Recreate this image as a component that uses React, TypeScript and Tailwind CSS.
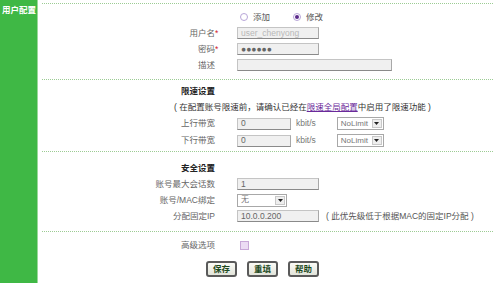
import React from "react";

const font = { fontFamily: '"Liberation Sans", "Noto Sans CJK SC", sans-serif' };

const Dotted = ({ className = "" }: { className?: string }) => (
  <div className={`h-0 border-t border-dotted border-[#9ccc94] ${className}`} />
);

const Row = ({
  label,
  star,
  h = "h-[16px]",
  children,
}: {
  label?: string;
  star?: boolean;
  h?: string;
  children?: React.ReactNode;
}) => (
  <div className={`flex items-center ${h}`}>
    <div className="w-[173px] text-right text-[#666] leading-none">{label}</div>
    <div className="w-[8px] text-[#d0202a] leading-none">{star ? "*" : ""}</div>
    <div className="ml-[14px] flex items-center">{children}</div>
  </div>
);

const Input = ({ w, value, muted }: { w: string; value?: string; muted?: boolean }) => (
  <div
    className={`${w} h-[12px] flex items-center bg-[#f0f0f0] border border-[#c4c4c4] border-b-[#8a8a8a] border-r-[#a8a8a8] px-[3px] leading-none ${
      muted ? "text-[#b8b8b8]" : "text-[#666]"
    }`}
  >
    {value}
  </div>
);

const Select = ({ w, value }: { w: string; value: string }) => (
  <div className={`${w} h-[13px] flex items-center justify-between bg-white border border-[#a8a8a8] pl-[3px] pr-[1px] leading-none text-[#777] text-[8px]`}>
    <span className="whitespace-nowrap">{value}</span>
    <span className="w-[10px] h-[9px] shrink-0 flex items-center justify-center bg-[#eeeeee] border border-[#c8c8c8]">
      <svg width="5" height="3" viewBox="0 0 5 3">
        <path d="M0 0h5L2.5 3z" fill="#222" />
      </svg>
    </span>
  </div>
);

const Radio = ({ checked }: { checked?: boolean }) => (
  <span className="w-[8px] h-[8px] rounded-full border border-[#b8a6d8] bg-white flex items-center justify-center">
    {checked && <span className="w-[4px] h-[4px] rounded-full bg-[#5a2a8a]" />}
  </span>
);

const Btn = ({ children }: { children: React.ReactNode }) => (
  <div className="w-[31px] h-[16px] flex items-center justify-center rounded-[3px] border-2 border-[#5a5a5a] bg-gradient-to-b from-[#fbfbf6] to-[#e2e4da] text-[#1e4a1e] font-bold leading-none">
    {children}
  </div>
);

export default function App() {
  return (
    <div className="flex w-[500px] h-[283px] bg-white text-[8.5px] overflow-hidden" style={font}>
      <div className="w-[38px] shrink-0 bg-[#3fb845] border-r border-[#9ad89a]">
        <div className="pt-[4px] pl-[2px] text-white font-bold text-[8.5px] leading-[12px] whitespace-nowrap">
          用户配置
        </div>
      </div>
      <div className="flex-1 pl-[4px] pr-[7px] pt-[3px] flex flex-col">
        <Dotted />

        <div className="mt-[5px]">
          <Row>
            <div className="flex items-center ml-[3px] text-[#555]">
              <Radio />
              <span className="ml-[5px]">添加</span>
              <span className="ml-[23px] flex items-center">
                <Radio checked />
                <span className="ml-[5px]">修改</span>
              </span>
            </div>
          </Row>
          <Row label="用户名" star>
            <Input w="w-[82px]" value="user_chenyong" muted />
          </Row>
          <Row label="密码" star>
            <Input w="w-[82px]" value="●●●●●●" />
          </Row>
          <Row label="描述">
            <Input w="w-[155px]" />
          </Row>
        </div>

        <Dotted className="mt-[6px]" />

        <div className="mt-[4px]">
          <div className="h-[15px] flex items-center">
            <div className="w-[173px] text-right font-bold text-[#222] leading-none">限速设置</div>
          </div>
          <div className="h-[16px] flex items-center pl-[132px] text-[#333] leading-none whitespace-nowrap">
            ( 在配置账号限速前，请确认已经在
            <span className="text-[#6a2a9a] underline">限速全局配置</span>
            中启用了限速功能 )
          </div>
          <Row label="上行带宽" h="h-[17px]">
            <Input w="w-[54px]" value="0" />
            <span className="ml-[5px] text-[#777]">kbit/s</span>
            <div className="ml-[21px]">
              <Select w="w-[47px]" value="NoLimit" />
            </div>
          </Row>
          <Row label="下行带宽" h="h-[17px]">
            <Input w="w-[54px]" value="0" />
            <span className="ml-[5px] text-[#777]">kbit/s</span>
            <div className="ml-[21px]">
              <Select w="w-[47px]" value="NoLimit" />
            </div>
          </Row>
        </div>

        <Dotted className="mt-[2px]" />

        <div className="mt-[9px]">
          <div className="h-[15px] flex items-center">
            <div className="w-[173px] text-right font-bold text-[#222] leading-none">安全设置</div>
          </div>
          <Row label="账号最大会话数">
            <Input w="w-[82px]" value="1" />
          </Row>
          <Row label="账号/MAC绑定">
            <Select w="w-[50px]" value="无" />
          </Row>
          <Row label="分配固定IP">
            <Input w="w-[82px]" value="10.0.0.200" />
            <span className="ml-[7px] text-[#555] whitespace-nowrap">( 此优先级低于根据MAC的固定IP分配 )</span>
          </Row>
        </div>

        <Dotted className="mt-[7px]" />

        <div className="mt-[5px]">
          <Row label="高级选项">
            <span className="ml-[3px] w-[9px] h-[9px] bg-[#ecdcf4] border border-[#c8a8d8]" />
          </Row>
        </div>

        <div className="mt-[8px] flex pl-[164px] gap-[10px]">
          <Btn>保存</Btn>
          <Btn>重填</Btn>
          <Btn>帮助</Btn>
        </div>
      </div>
    </div>
  );
}
